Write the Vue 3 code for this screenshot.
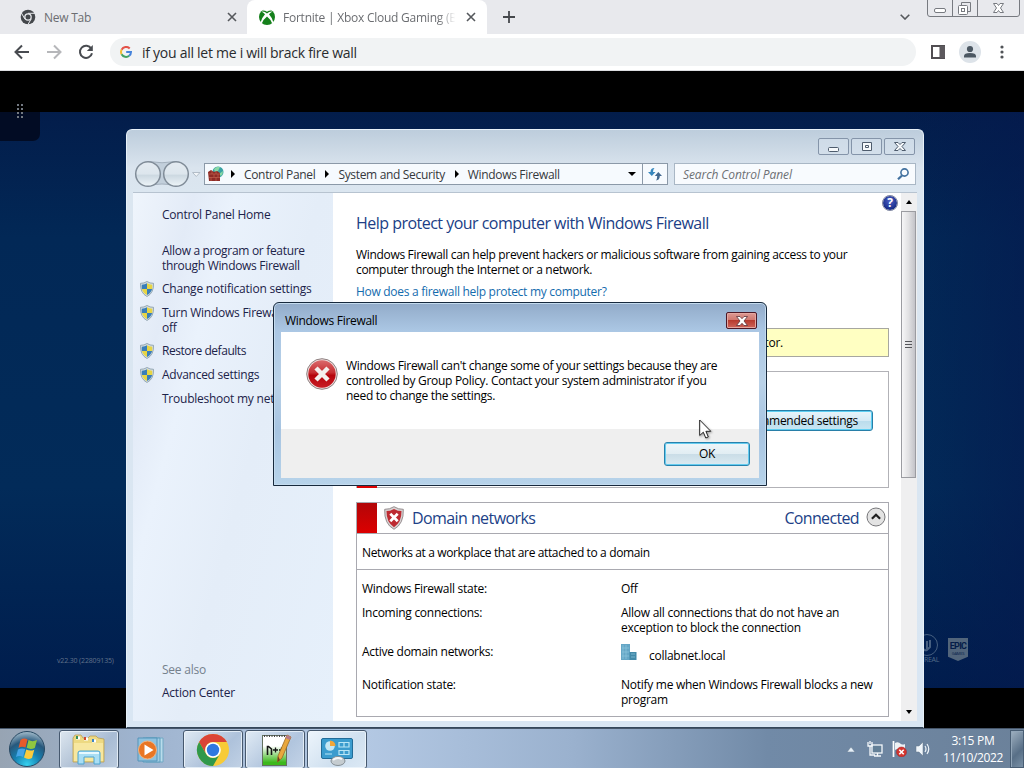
<script setup>
const crumbs = ['Control Panel', 'System and Security', 'Windows Firewall']

const tasks = [
  { lines: ['Allow a program or feature', 'through Windows Firewall'], shield: false, ls: -0.31 },
  { lines: ['Change notification settings'], shield: true, ls: -0.21 },
  { lines: ['Turn Windows Firewall on or', 'off'], shield: true, ls: -0.24 },
  { lines: ['Restore defaults'], shield: true, ls: -0.46 },
  { lines: ['Advanced settings'], shield: true, ls: -0.26 },
  { lines: ['Troubleshoot my network'], shield: false, ls: -0.24 },
]

const pins = [
  { id: 'explorer', open: true },
  { id: 'wmp', open: false },
  { id: 'chrome', open: true },
  { id: 'npp', open: true },
  { id: 'cpl', open: true, active: true },
]
</script>

<template>
  <div class="desktop">
    <!-- browser -->
    <div class="browser">
      <div class="tabs">
        <div class="tab first">
          <svg class="fav" viewBox="0 0 16 16">
            <circle cx="8" cy="8" r="7.300" fill="#44474b" />
            <path d="M8 4.300H15M4.800 9.900L1.400 4M11.200 9.900L7.800 15.800" stroke="#e8eaed" stroke-width="1" />
            <circle cx="8" cy="8" r="3.800" fill="#e8eaed" />
            <circle cx="8" cy="8" r="2.500" fill="#44474b" />
          </svg>
          <span class="tab-title t1">New Tab</span>
          <svg class="x" viewBox="0 0 10 10"><path d="M1 1L9 9M9 1L1 9" /></svg>
        </div>
        <div class="tab active">
          <svg class="fav" viewBox="0 0 16 16">
            <circle cx="8" cy="8" r="8" fill="#15801b" />
            <path d="M3.500 1.500Q6 1.300 8 2.700Q10 1.300 12.500 1.500L11.500 0H4.500Z" fill="#fff" />
            <path d="M1.500 13.500Q3 8.500 6 5.300Q4.500 3.500 2.500 2.600Q5.500 2.200 8 4.400Q10.500 2.200 13.500 2.600Q11.500 3.500 10 5.300Q13 8.500 14.500 13.500L13.200 14.500Q12 10.500 8 7.400Q4 10.500 2.800 14.500Z" fill="#fff" />
          </svg>
          <span class="tab-title t2">Fortnite | Xbox Cloud Gaming (Be</span>
          <svg class="x" viewBox="0 0 10 10"><path d="M1 1L9 9M9 1L1 9" /></svg>
        </div>
        <svg class="plus" viewBox="0 0 12 12"><path d="M6 0V12M0 6H12" stroke="#45484c" stroke-width="1.800" /></svg>
        <svg class="chev" viewBox="0 0 10 6"><path d="M.7 .7L5 5L9.300 .7" fill="none" stroke="#55585c" stroke-width="1.600" /></svg>
        <svg class="caption-buttons" viewBox="0 0 94 18">
          <g fill="none" stroke="#777a80">
            <path d="M.5 0V14Q.5 16.500 3 16.500H90Q92.500 16.500 92.500 14V0M25.500 0V16M50.500 0V16" />
            <rect x="7.500" y="8.500" width="11" height="4" rx="1.500" fill="#fff" />
            <path d="M34.500 5V2.500H43.500V11.500H41" />
            <rect x="31.500" y="5.500" width="9" height="9" rx="1" fill="#fff" />
            <rect x="34.500" y="8.500" width="3" height="3" />
            <path d="M66.500 3.500H70L71.500 5.500L73 3.500H76.500L73.500 8L76.500 12.500H73L71.500 10.500L70 12.500H66.500L69.500 8Z" fill="#fff" />
          </g>
        </svg>
      </div>
      <div class="toolbar">
        <svg class="nav" viewBox="0 0 16 16"><path d="M15 8H2M8 1.500L1.500 8L8 14.500" /></svg>
        <svg class="nav off" viewBox="0 0 16 16"><path d="M1 8H14M8 1.500L14.500 8L8 14.500" /></svg>
        <svg class="nav" viewBox="0 0 16 16">
          <path d="M13.300 4.700A6.100 6.100 0 1 0 14 9.300" />
          <path d="M14.800 1V7H8.800Z" class="solid" />
        </svg>
        <div class="omnibox">
          <svg class="google" viewBox="0 0 12 12" fill="none" stroke-width="2">
            <path d="M9.700 2.500A5 5 0 0 0 1.600 3.700" stroke="#e35349" />
            <path d="M1.600 3.700A5 5 0 0 0 1.600 8.300" stroke="#f1bb35" />
            <path d="M1.600 8.300A5 5 0 0 0 9.200 9.800" stroke="#42a363" />
            <path d="M9.200 9.800A5 5 0 0 0 11 6H6.200" stroke="#4583db" />
          </svg>
          <span>if you all let me i will brack fire wall</span>
        </div>
        <svg class="panel-icon" viewBox="0 0 14 14"><path d="M1 1H13V13H1ZM9.500 1V13" fill="none" stroke="#514e52" stroke-width="2" /><path d="M9 1H14V13H9Z" fill="#5c595d" /></svg>
        <svg class="avatar" viewBox="0 0 22 22">
          <circle cx="11" cy="11" r="11" fill="#dde3e9" />
          <circle cx="11" cy="8" r="3.100" fill="#4c5863" />
          <path d="M5 16.500V15Q5 12 11 12T17 15V16.500Z" fill="#4c5863" />
        </svg>
        <svg class="dots" viewBox="0 0 4 14" fill="#505357"><circle cx="2" cy="2" r="1.600" /><circle cx="2" cy="7" r="1.600" /><circle cx="2" cy="12" r="1.600" /></svg>
      </div>
      <div class="stage">
        <div class="game"></div>
        <div class="handle">
          <i v-for="n in 8" :key="n"></i>
        </div>
        <span class="version">v22.30 (22809135)</span>
        <svg class="unreal" viewBox="0 0 36 32" fill="none" stroke="#465f80">
          <circle cx="13" cy="11" r="10.500" />
          <path d="M9 6V14Q10 17 13 16L16 13V6M13 7V15" stroke-width="2" />
        </svg>
        <span class="unreal-word">UNREAL</span>
        <div class="epic"><b>EPIC</b><small>GAMES</small></div>
      </div>
    </div>

    <!-- control panel window -->
    <div class="window">
      <div class="caption">
        <div class="wbtn"><svg viewBox="0 0 14 12"><rect x="1.500" y="6.500" width="10" height="4" rx="1" /></svg></div>
        <div class="wbtn"><svg viewBox="0 0 14 12"><path d="M2.500 1.500H11.500V9.500H2.500ZM5.500 4.500H8.500V6.500H5.500Z" /></svg></div>
        <div class="wbtn"><svg viewBox="0 0 14 12"><path d="M1.500 1.500H5L7 3.500L9 1.500H12.500L9 5.500L12.500 9.500H9L7 7.500L5 9.500H1.500L5 5.500Z" /></svg></div>
      </div>
      <div class="navbar">
        <svg class="orbs" viewBox="0 0 68 28">
          <defs>
            <linearGradient id="orb" x2="0" y2="1">
              <stop offset="0" stop-color="#e4ebf1" />
              <stop offset=".5" stop-color="#dde6ed" />
              <stop offset=".55" stop-color="#ccd8e1" />
              <stop offset="1" stop-color="#eef5f9" />
            </linearGradient>
          </defs>
          <path d="M14 1.500Q28 4 42 1.500V26Q28 22 14 26Z" fill="#c2cfdb" stroke="#a3b0bd" />
          <circle cx="14" cy="14" r="12.300" fill="url(#orb)" stroke="#808c98" stroke-width="1.500" />
          <circle cx="42" cy="14" r="12.300" fill="url(#orb)" stroke="#808c98" stroke-width="1.500" />
          <path d="M58.500 12.500H66L62.300 16.500Z" fill="#f2f5f8" stroke="#b2bdc8" />
        </svg>
        <div class="address">
          <svg class="wall" viewBox="0 0 16 16">
            <circle cx="10" cy="6" r="5.500" fill="#3aa3a4" />
            <path d="M6 3Q9 0 12 1L10 5L7 6ZM11 8L15 5Q15 8 13 10Z" fill="#8ad9a5" />
            <path d="M0 6L3 4L6 6L9 5L12 7V15L1 15Z" fill="#8e2b26" />
            <path d="M1 8H12M1 11.500H12M4 5V8M8 5V8M6 8V11M10 8V11M3 11V15M8 11V15" stroke="#c0614f" stroke-width=".7" />
          </svg>
          <template v-for="c in crumbs" :key="c">
            <svg class="arrow" viewBox="0 0 4 8"><path d="M0 0L4 4L0 8Z" /></svg>
            <span class="crumb">{{ c }}</span>
          </template>
          <svg class="drop" viewBox="0 0 8 4"><path d="M0 0H8L4 4Z" /></svg>
          <div class="refresh">
            <svg viewBox="0 0 14 14">
              <path d="M6.500 1Q2.500 1 2.500 5H0L3.800 9L7.500 5H5Q5 2.500 6.500 1Z" fill="#3787bd" />
              <path d="M8 13.500Q11.800 13 11.800 9H14L10.300 5L6.800 9H9.200Q9.200 12 8 13.500Z" fill="#42688f" />
            </svg>
          </div>
        </div>
        <div class="search">
          <span>Search Control Panel</span>
          <svg viewBox="0 0 12 12" fill="none" stroke="#42719f"><circle cx="7.500" cy="4.500" r="3.600" stroke-width="1.600" /><path d="M5 7.500L1 11.300" stroke-width="2.200" /></svg>
        </div>
      </div>
      <div class="client">
        <aside class="side">
          <div class="home">Control Panel Home</div>
          <div v-for="t in tasks" :key="t.lines[0]" class="task" :class="{ two: t.lines.length > 1 }">
            <svg v-if="t.shield" class="shield" viewBox="0 0 14 16">
              <path d="M7 .5Q10 2.500 13.500 2.300Q14 12 7 15.500Q0 12 .5 2.300Q4 2.500 7 .5Z" fill="#d5dde0" stroke="#8398a5" stroke-width=".8" />
              <path d="M7 2.300V8H1.900Q1.500 6 1.800 3.700Q5 3.700 7 2.300Z" fill="#397eb9" />
              <path d="M7 2.300V8H12.100Q12.500 6 12.200 3.700Q9 3.700 7 2.300Z" fill="#e7d544" />
              <path d="M1.900 8H7V14Q3 12 1.900 8Z" fill="#e7d544" />
              <path d="M12.100 8H7V14Q11 12 12.100 8Z" fill="#397eb9" />
            </svg>
            <span :style="{ letterSpacing: t.ls + 'px' }"><template v-for="(l, i) in t.lines" :key="l"><br v-if="i">{{ l }}</template></span>
          </div>
          <div class="see">See also</div>
          <div class="action">Action Center</div>
        </aside>
        <main class="main">
          <div class="help">?</div>
          <h1>Help protect your computer with Windows Firewall</h1>
          <p class="intro">Windows Firewall can help prevent hackers or malicious software from gaining access to your<br>computer through the Internet or a network.</p>
          <a class="how">How does a firewall help protect my computer?</a>
          <div class="notice">For your security, some settings are controlled by your system administrator.</div>
          <div class="update">
            <i class="red"></i>
            <div class="use">Use recommended settings</div>
          </div>
          <section class="network">
            <header>
              <i class="red"></i>
              <svg class="red-shield" viewBox="0 0 20 24">
                <path d="M10 .7Q14.500 3.500 19.300 3.300Q20 18 10 23.300Q0 18 .7 3.300Q5.500 3.500 10 .7Z" fill="#d8d2d2" stroke="#8c8587" stroke-width=".9" />
                <path d="M10 2.900Q14 5.100 17.500 5.100Q17.700 16.500 10 21.200Q2.300 16.500 2.500 5.100Q6 5.100 10 2.900Z" fill="#bd2a31" />
                <path d="M6.300 7.800L13.700 15.200M13.700 7.800L6.300 15.200" stroke="#fff" stroke-width="2.700" />
              </svg>
              <span class="net-name">Domain networks</span>
              <span class="status">Connected</span>
              <svg class="collapse" viewBox="0 0 20 20"><circle cx="10" cy="10" r="9" fill="#e3e3e3" stroke="#77777a" /><path d="M5.900 11.800L10 7.700L14.100 11.800" fill="none" stroke="#222" stroke-width="2.200" /></svg>
            </header>
            <div class="desc">Networks at a workplace that are attached to a domain</div>
            <dl>
              <dt>Windows Firewall state:</dt>
              <dd>Off</dd>
              <dt>Incoming connections:</dt>
              <dd>Allow all connections that do not have an<br>exception to block the connection</dd>
              <dt>Active domain networks:</dt>
              <dd class="domain">
                <svg viewBox="0 0 16 16">
                  <rect width="9" height="16" fill="#65a6c6" />
                  <rect x="8.500" y="8" width="7" height="8" fill="#438aa9" />
                  <path d="M2 1V15M5 1V15M1 4H8M1 8H8M1 12H8M10 10H14M10 13H14" stroke="#8cc5dc" stroke-width=".7" />
                </svg>
                <span>collabnet.local</span>
              </dd>
              <dt>Notification state:</dt>
              <dd>Notify me when Windows Firewall blocks a new<br>program</dd>
            </dl>
          </section>
        </main>
        <div class="scroll">
          <svg class="up" viewBox="0 0 6 4"><path d="M0 4L3 0L6 4Z" /></svg>
          <div class="thumb"><i></i><i></i><i></i></div>
          <svg class="down" viewBox="0 0 6 4"><path d="M0 0H6L3 4Z" /></svg>
        </div>
      </div>
    </div>

    <!-- message box -->
    <div class="dialog">
      <div class="dlg-title">
        <span>Windows Firewall</span>
        <div class="dlg-close"><svg viewBox="0 0 14 12"><path d="M1.500 1.500H5L7 3.700L9 1.500H12.500L9 6L12.500 10.500H9L7 8.300L5 10.500H1.500L5 6Z" fill="#fff" stroke="#5c3238" stroke-width=".8" /></svg></div>
      </div>
      <div class="dlg-body">
        <svg class="error" viewBox="0 0 32 32">
          <defs>
            <linearGradient id="err" x2="0" y2="1">
              <stop offset="0" stop-color="#da6a6c" />
              <stop offset=".45" stop-color="#c62d31" />
              <stop offset=".55" stop-color="#b5040c" />
              <stop offset="1" stop-color="#c91c24" />
            </linearGradient>
          </defs>
          <circle cx="16" cy="16" r="15.300" fill="#efdddd" stroke="#8d8080" />
          <circle cx="16" cy="16" r="13.700" fill="url(#err)" />
          <path d="M10 10L22 22M22 10L10 22" stroke="#f4f0ee" stroke-width="4.500" />
        </svg>
        <p>Windows Firewall can't change some of your settings because they are<br>controlled by Group Policy. Contact your system administrator if you<br>need to change the settings.</p>
      </div>
      <div class="dlg-foot"><div class="ok">OK</div></div>
    </div>
    <svg class="cursor" viewBox="0 0 14 21"><path d="M.7 1V16.500L4.300 13.200L6.800 19L9.300 17.900L6.900 12.300H11.800Z" fill="#fff" stroke="#222" stroke-width="1" /></svg>

    <!-- taskbar -->
    <div class="taskbar">
      <svg class="start" viewBox="0 0 38 38">
        <defs>
          <radialGradient id="start" cx=".5" cy=".95" r=".95">
            <stop offset="0" stop-color="#35d1ef" />
            <stop offset=".4" stop-color="#1680b1" />
            <stop offset=".7" stop-color="#27587c" />
            <stop offset="1" stop-color="#a5bdcc" />
          </radialGradient>
        </defs>
        <circle cx="19" cy="19" r="17.500" fill="url(#start)" stroke="#284963" />
        <path d="M12.500 10Q16 7.500 19.500 9.500L17.500 17.500Q13.500 16 10.500 18Z" fill="#e75b2b" />
        <path d="M20.500 10Q24.500 12.300 29 10L26.800 18Q22.500 20 18.700 17.800Z" fill="#8fc640" />
        <path d="M10 19.500Q13.500 17.700 17.200 19L15 27Q11.500 25 8 27Z" fill="#45a4e7" />
        <path d="M18.300 19.500Q22.300 21.500 26.300 19.700L24 28Q20 30 16 27.500Z" fill="#fbcb3e" />
      </svg>
      <div v-for="p in pins" :key="p.id" class="pin" :class="{ open: p.open, active: p.active }">
        <svg v-if="p.id === 'explorer'" viewBox="0 0 34 34">
          <path d="M1 5L3 2H9L11 5H16L18 3H24L26 5L32 6V29H1Z" fill="#edd982" stroke="#b99e55" stroke-width=".8" />
          <path d="M4 5H8M12 6H16M20 8H24" stroke="#fff" stroke-width="3" />
          <path d="M5 3V6" stroke="#36905e" stroke-width="2" />
          <path d="M13 4V7" stroke="#d0482f" stroke-width="2" />
          <path d="M21 6V9" stroke="#3d84c6" stroke-width="2" />
          <path d="M2 10H31V28H2Z" fill="#f7e7a0" />
          <path d="M6 31V20Q6 18 8 18H26Q28 18 28 20V31H22V24H12V31Z" fill="#a9def4" stroke="#4ba4d1" />
          <path d="M7 20H27" stroke="#e7f9ff" stroke-width="2" />
        </svg>
        <svg v-else-if="p.id === 'wmp'" viewBox="0 0 34 34">
          <path d="M12 5H29V29H12Z" fill="#b9dceb" stroke="#70a8c4" />
          <path d="M9 5H26V29H9Z" fill="#a1cde4" stroke="#5e9ebe" />
          <path d="M4 5H23V28H4Z" fill="#8fc2de" stroke="#5594b9" />
          <circle cx="13.500" cy="17" r="9" fill="#e97624" stroke="#f1b27e" />
          <path d="M10.500 11.500L19.500 17L10.500 22.500Z" fill="#fff" />
        </svg>
        <svg v-else-if="p.id === 'chrome'" viewBox="0 0 34 34">
          <circle cx="17" cy="17" r="16" fill="#f7cb37" />
          <path d="M3.100 9A16 16 0 0 1 30.900 9H17A8 8 0 0 0 10.100 21Z" fill="#db4437" />
          <path d="M3.100 9A16 16 0 0 0 17 33L23.900 21A8 8 0 0 1 10.100 21Z" fill="#30984b" />
          <circle cx="17" cy="17" r="7.800" fill="#fff" />
          <circle cx="17" cy="17" r="6.200" fill="#3078e1" />
        </svg>
        <svg v-else-if="p.id === 'npp'" viewBox="0 0 34 34">
          <defs><linearGradient id="note" x2="0" y2="1"><stop offset=".35" stop-color="#fff" /><stop offset=".9" stop-color="#3cb81c" /></linearGradient></defs>
          <rect x="4.500" y="2.500" width="24" height="30" fill="url(#note)" stroke="#63705f" />
          <path d="M6 3H27" stroke="#454545" stroke-width="2" stroke-dasharray="1 1.500" />
          <path d="M9.500 22V13.500H10.500L13.500 16V22" fill="none" stroke="#151515" stroke-width="1.600" />
          <path d="M15 17H20M17.500 14.500V19.500M21 17H26M23.500 14.500V19.500" stroke="#151515" stroke-width="1.300" />
          <path d="M29 2L33 4L24 25L19.500 29L20 23Z" fill="#e9a73d" stroke="#9c6a25" stroke-width=".8" />
          <path d="M29 2L33 4L31.700 7L27.500 5Z" fill="#b77a89" />
          <path d="M20 23L19.500 29L22 27Z" fill="#704422" />
        </svg>
        <svg v-else viewBox="0 0 34 34">
          <rect x="1.500" y="5.500" width="31" height="20" rx="1.500" fill="#3b9cce" stroke="#226c98" />
          <circle cx="10" cy="13" r="4.800" fill="#c5e7f4" />
          <path d="M10 13V7.500A5.500 5.500 0 0 1 15.500 13Z" fill="#f2a637" />
          <path d="M5 21H12M19 9.500H29V14H19ZM19 17.500H29V21.500H19ZM24 9.500V14M24 17.500V21.500" fill="none" stroke="#b9e6f6" stroke-width="1.200" />
          <ellipse cx="18" cy="28" rx="7" ry="4.500" fill="#c5ccd0" stroke="#858f96" />
          <path d="M13 27Q17 23.500 22 26" stroke="#f5f7f8" fill="none" stroke-width="2" />
        </svg>
      </div>
      <div class="tray">
        <svg class="tray-up" viewBox="0 0 8 5"><path d="M0 5L4 0L8 5Z" fill="#e6f0f8" stroke="#66798c" stroke-width=".5" /></svg>
        <svg class="tray-icon" viewBox="0 0 16 16" fill="none" stroke="#f4f8fb"><rect x="5" y="4" width="10" height="8" fill="#637f97" stroke-width="1.300" /><path d="M7 15H14M10.500 12V15M1 1V5H5V1M3 5V14H8M3 0V3" stroke-width="1.300" /></svg>
        <svg class="tray-icon" viewBox="0 0 16 16"><path d="M2.500 0V16" stroke="#fff" stroke-width="1.700" /><path d="M4 2Q7 0 10 3Q12 4 14 3V10Q11 11 9 9T4 9Z" fill="#edf1f5" /><circle cx="10.500" cy="11" r="5" fill="#d4352e" stroke="#a22326" stroke-width=".5" /><path d="M8.300 8.800L12.700 13.200M12.700 8.800L8.300 13.200" stroke="#fff" stroke-width="1.600" /></svg>
        <svg class="tray-icon" viewBox="0 0 16 16"><path d="M1 5H4L8 1V15L4 11H1Z" fill="#eff5fa" stroke="#617488" stroke-width=".5" /><path d="M10 5Q12 8 10 11M12 3Q15.500 8 12 13" fill="none" stroke="#eff5fa" stroke-width="1.200" /></svg>
        <div class="clock">3:15 PM<br><span>11/10/2022</span></div>
        <div class="peek"></div>
      </div>
    </div>
  </div>
</template>

<style>
body {
  margin: 0;
  overflow: hidden;
}
</style>

<style scoped>
* {
  box-sizing: border-box;
}
svg {
  display: block;
  flex: none;
}
.desktop {
  position: relative;
  width: 1024px;
  height: 768px;
  overflow: hidden;
  background: #000;
  font: 12px/15px "Open Sans", "Noto Sans", sans-serif;
  letter-spacing: -0.24px;
  color: #000;
  white-space: nowrap;
}

/* browser */
.tabs {
  display: flex;
  height: 34px;
  background: #e8e9ed;
  color: #6b6d71;
}
.tab {
  display: flex;
  align-items: center;
  height: 34px;
}
.tab.first {
  width: 247px;
  padding-left: 20px;
}
.tab.active {
  width: 240px;
  padding-left: 12px;
  background: #fff;
  border-radius: 8px 8px 0 0;
}
.fav {
  width: 16px;
  height: 16px;
}
.tab-title {
  margin-left: 8px;
}
.t1 {
  width: 183px;
}
.t2 {
  width: 176px;
  -webkit-mask-image: linear-gradient(90deg, #000 88%, transparent 98%);
  mask-image: linear-gradient(90deg, #000 88%, transparent 98%);
}
.x {
  width: 10px;
  height: 10px;
  stroke: #55585c;
  stroke-width: 1.6;
}
.active .x {
  margin-left: 7px;
}
.plus {
  width: 12px;
  height: 12px;
  margin: 11px 0 0 16px;
}
.chev {
  width: 10px;
  height: 6px;
  margin: 14px 0 0 385px;
}
.caption-buttons {
  width: 94px;
  height: 18px;
  margin-left: 17px;
}
.toolbar {
  display: flex;
  align-items: center;
  height: 37px;
  padding-left: 14px;
  background: #fff;
  border-bottom: 1px solid #dcdde0;
}
.nav {
  width: 16px;
  height: 16px;
  margin-right: 16px;
  fill: none;
  stroke: #484b50;
  stroke-width: 2;
}
.nav.off {
  stroke: #b6b7ba;
}
.nav .solid {
  fill: #484b50;
  stroke: none;
}
.omnibox {
  display: flex;
  align-items: center;
  width: 806px;
  height: 28px;
  padding-left: 10px;
  border-radius: 14px;
  background: #f1f3f4;
  color: #292b2e;
  font-size: 14px;
  letter-spacing: -0.27px;
}
.google {
  width: 12px;
  height: 12px;
  margin-right: 10px;
}
.panel-icon {
  width: 14px;
  height: 14px;
  margin-left: 15px;
}
.avatar {
  width: 22px;
  height: 22px;
  margin-left: 14px;
}
.dots {
  width: 4px;
  height: 14px;
  margin-left: 19px;
}
.stage {
  position: relative;
  height: 657px;
  padding-top: 41px;
  background: #000;
}
.game {
  height: 576px;
  background: linear-gradient(90deg, transparent 0 88%, rgba(5, 25, 78, .6)), linear-gradient(180deg, #031d4b, #022856 22%, #022b59 65%, #001d4d);
}
.handle {
  position: absolute;
  left: 0;
  top: 33px;
  width: 40px;
  height: 37px;
  padding-left: 17px;
  display: grid;
  grid-template-columns: 2px 2px;
  gap: 2px;
  align-content: start;
  border-radius: 0 0 7px 0;
  background: linear-gradient(#000 8px, #020c24 8px);
}
.handle i {
  width: 2px;
  height: 2px;
  background: #737982;
}
.version {
  position: absolute;
  left: 57px;
  top: 583px;
  font: 7px/14px "Open Sans", sans-serif;
  letter-spacing: -0.15px;
  color: #60728a;
}
.unreal {
  position: absolute;
  left: 914px;
  top: 563px;
  width: 36px;
  height: 32px;
}
.unreal-word {
  position: absolute;
  left: 914px;
  top: 581px;
  color: #536b88;
  font-size: 7px;
}
.epic {
  position: absolute;
  left: 948px;
  top: 567px;
  width: 20px;
  height: 23px;
  background: #52657b;
  color: #041c49;
  clip-path: polygon(0 0, 100% 0, 100% 82%, 50% 100%, 0 82%);
  text-align: center;
}
.epic b {
  display: block;
  padding-top: 3px;
  font: bold 9px/10px Roboto, sans-serif;
  letter-spacing: -0.7px;
}
.epic small {
  display: block;
  font-size: 4px;
  line-height: 6px;
}

/* window */
.window {
  position: absolute;
  left: 126px;
  top: 129px;
  width: 798px;
  height: 599px;
  padding: 0 6px 7px;
  border-radius: 6px 6px 0 0;
  border: 1px solid #e8f1f8;
  border-bottom-color: #34475b;
  background: linear-gradient(180deg, #bdcddc 0, #dae4ee 38px, #dbe6f0 62px, #d9e6f3);
}
.caption {
  display: flex;
  justify-content: flex-end;
  height: 33px;
  padding: 8px 2px 0;
  gap: 2px;
}
.wbtn {
  display: flex;
  align-items: center;
  justify-content: center;
  width: 31px;
  height: 17px;
  border: 1px solid #8494a9;
  border-radius: 2px;
  background: rgba(214, 225, 237, .6);
}
.wbtn svg {
  width: 14px;
  height: 12px;
  fill: #f6f9fb;
  stroke: #4e5c6d;
}
.navbar {
  display: flex;
  align-items: center;
  height: 22px;
}
.orbs {
  width: 68px;
  height: 28px;
  margin: 0 2px 0 1px;
}
.address {
  display: flex;
  align-items: center;
  width: 464px;
  height: 22px;
  padding-left: 3px;
  border: 1px solid #8b99a8;
  background: #f6fafe;
}
.wall {
  width: 16px;
  height: 16px;
  margin-right: 7px;
}
.arrow {
  width: 4px;
  height: 8px;
}
.crumb {
  margin: 0 10px 0 9px;
  color: #35383c;
  letter-spacing: -0.33px;
}
.drop {
  width: 8px;
  height: 4px;
  margin: 0 6px 0 auto;
}
.refresh {
  display: flex;
  align-items: center;
  justify-content: center;
  width: 25px;
  height: 20px;
  border-left: 1px solid #8b99a8;
}
.refresh svg {
  width: 14px;
  height: 14px;
}
.search {
  display: flex;
  align-items: center;
  justify-content: space-between;
  width: 242px;
  height: 22px;
  margin-left: 6px;
  padding: 0 6px 0 8px;
  border: 1px solid #a9b7c5;
  background: #f8fbfe;
  color: #6d7074;
  font-style: italic;
  letter-spacing: -0.1px;
}
.search svg {
  width: 12px;
  height: 12px;
}
.client {
  display: flex;
  height: 529px;
  margin-top: 7px;
  border-top: 1px solid #b7c3d0;
  background: #fff;
}
.side {
  width: 200px;
  padding: 14px 0 0 29px;
  overflow: hidden;
  background: linear-gradient(105deg, #eff5fc 0, #e3ebf7 18%, #eaf2fc 30%, #e4edf8 55%, #e6f0fb 100%);
  color: #1c2349;
}
.home {
  margin-bottom: 21px;
}
.task {
  position: relative;
  padding-bottom: 9px;
}
.task.two {
  padding-bottom: 8px;
}
.shield {
  position: absolute;
  left: -22px;
  top: 0;
  width: 14px;
  height: 16px;
}
.see {
  margin-top: 247px;
  color: #75818d;
}
.action {
  margin-top: 8px;
}
.main {
  position: relative;
  width: 568px;
  padding: 19px 12px 0 23px;
}
.help {
  position: absolute;
  left: 549px;
  top: 2px;
  width: 16px;
  height: 16px;
  border: 1px solid #d1d5e9;
  border-radius: 50%;
  outline: 1px solid #8188a0;
  outline-offset: -1px;
  background: radial-gradient(circle at 50% 35%, #4d61c5, #182d8b 70%);
  color: #fff;
  font-weight: bold;
  line-height: 14px;
  text-align: center;
}
h1 {
  margin: 0;
  color: #203e86;
  font-weight: 400;
  font-size: 16px;
  line-height: 22px;
  letter-spacing: -0.52px;
}
.intro {
  margin: 13px 0 0;
  letter-spacing: -0.32px;
}
.how {
  display: block;
  margin-top: 7px;
  color: #146cae;
  letter-spacing: -0.29px;
}
.notice {
  height: 29px;
  margin-top: 29px;
  padding: 6px 105px 0 0;
  text-align: right;
  border: 1px solid #a7a7a0;
  background: #ffffc2;
}
.update {
  position: relative;
  height: 117px;
  margin-top: 14px;
  border: 1px solid #b2b2b7;
}
.update .red {
  position: absolute;
  left: 0;
  bottom: -1px;
  height: 116px;
}
.red {
  display: block;
  width: 20px;
  background: linear-gradient(#b20608, #dc0000);
}
.use {
  width: 180px;
  height: 21px;
  margin: 38px 15px 0 auto;
  padding: 2px 14px;
  text-align: right;
  border: 1px solid #287fa8;
  border-radius: 3px;
  box-shadow: inset 0 0 0 1px #5dcef2;
  background: linear-gradient(#e8f5fb, #d5eaf5 50%, #badcec 51%, #c9e6f3);
  letter-spacing: -0.3px;
}
.network {
  height: 215px;
  margin-top: 14px;
  border: 1px solid #a9a9b0;
}
header {
  display: flex;
  align-items: center;
  height: 31px;
  border-bottom: 1px solid #a9a9b0;
  color: #213f87;
  font-size: 16px;
  line-height: 22px;
}
header .red {
  height: 30px;
}
.red-shield {
  width: 20px;
  height: 24px;
  margin: 0 8px 0 7px;
}
.net-name {
  letter-spacing: -0.58px;
}
.status {
  margin-left: auto;
  letter-spacing: -0.65px;
}
.collapse {
  width: 20px;
  height: 20px;
  margin: 0 2px 2px 7px;
}
.desc {
  height: 36px;
  padding: 11px 5px;
  border-bottom: 1px solid #a9a9b0;
  letter-spacing: -0.37px;
}
dl {
  display: grid;
  grid-template-columns: 259px 1fr;
  grid-template-rows: 24px 39px 33px 30px;
  margin: 0;
  padding: 11px 0 0 5px;
  letter-spacing: -0.27px;
}
dt,
dd {
  margin: 0;
}
.domain {
  display: flex;
}
.domain svg {
  width: 16px;
  height: 16px;
}
.domain span {
  margin: 4px 0 0 12px;
}
.scroll {
  display: flex;
  flex-direction: column;
  align-items: center;
  width: 16px;
  background: #efeff0;
}
.up,
.down {
  width: 6px;
  height: 4px;
}
.up {
  margin: 7px 0;
}
.thumb {
  display: flex;
  flex-direction: column;
  align-items: center;
  align-self: flex-start;
  justify-content: center;
  gap: 2px;
  width: 15px;
  height: 267px;
  padding-right: 1px;
  border: 1px solid #9b9ca1;
  background: linear-gradient(90deg, #f6f6f7, #e1e1e3 50%, #c3c3c8);
}
.thumb i {
  width: 7px;
  height: 1px;
  background: #55565a;
}
.down {
  margin: auto 0 7px;
}

/* message box */
.dialog {
  position: absolute;
  left: 273px;
  top: 302px;
  width: 494px;
  height: 184px;
  padding: 0 7px 7px;
  border: 1px solid #17293d;
  border-radius: 6px 6px 0 0;
  background: linear-gradient(#92abc9, #abc7e4 28px, #bad2e8 80px, #a7c4e1 126px, #b7d3ea);
  box-shadow: inset 0 0 0 1px #c4dbee;
}
.dlg-title {
  display: flex;
  align-items: center;
  justify-content: space-between;
  height: 29px;
  padding: 6px 2px 0 4px;
  letter-spacing: -0.3px;
}
.dlg-close {
  display: flex;
  align-items: center;
  justify-content: center;
  width: 31px;
  height: 17px;
  border: 1px solid #4c1826;
  border-radius: 2px;
  background: linear-gradient(#dc9a94, #d0776e 48%, #b73b2f 50%, #cf655a);
  box-shadow: inset 0 0 0 1px #e4a7a0;
}
.dlg-close svg {
  width: 14px;
  height: 12px;
}
.dlg-body {
  display: flex;
  height: 97px;
  padding: 26px 0 0 25px;
  background: #fff;
}
.error {
  width: 32px;
  height: 32px;
}
.dlg-body p {
  margin: 0 0 0 8px;
  letter-spacing: -0.31px;
}
.dlg-foot {
  display: flex;
  justify-content: flex-end;
  height: 49px;
  padding: 13px 9px 0;
  background: #efefef;
}
.ok {
  width: 86px;
  height: 24px;
  border: 1px solid #2782ad;
  border-radius: 3px;
  box-shadow: inset 0 0 0 1px #65ccef;
  background: linear-gradient(#eff6f9, #e1edf3 50%, #cadde7 51%, #dbeaf1);
  line-height: 22px;
  text-align: center;
}
.cursor {
  position: absolute;
  left: 699px;
  top: 419px;
  width: 14px;
  height: 21px;
  filter: drop-shadow(1px 1px 1px rgba(0, 0, 0, .35));
}

/* taskbar */
.taskbar {
  position: absolute;
  left: 0;
  bottom: 0;
  display: flex;
  width: 1024px;
  height: 40px;
  padding-top: 1px;
  border-top: 1px solid #46566a;
  background: linear-gradient(90deg, #97a4b3, #9eb3ce 13%, #b4c9e4 35%, #9ab1ce 56%, #718aa7 75%, #6b819a);
}
.start {
  width: 38px;
  height: 38px;
  margin: 0 13px 0 8px;
}
.pin {
  display: flex;
  align-items: center;
  justify-content: center;
  width: 60px;
  height: 39px;
  margin-right: 2px;
  border: 1px solid transparent;
  border-radius: 3px;
}
.pin.open {
  border-color: #46586e;
  background: linear-gradient(135deg, rgba(238, 246, 252, .8), rgba(180, 199, 222, .5) 60%, rgba(209, 222, 237, .6));
  box-shadow: inset 0 0 0 1px rgba(240, 247, 252, .75);
}
.pin.active {
  background: linear-gradient(135deg, #edf5fc, #d0e0ef 60%, #dce9f5);
}
.pin svg {
  width: 34px;
  height: 34px;
}
.tray {
  display: flex;
  align-items: center;
  margin-left: auto;
}
.tray-up {
  width: 8px;
  height: 5px;
  margin-right: 12px;
}
.tray-icon {
  width: 16px;
  height: 16px;
  margin-right: 8px;
}
.clock {
  width: 76px;
  margin: -1px -1px 0 -4px;
  color: #fff;
  text-align: center;
  line-height: 17px;
}
.clock span {
  letter-spacing: -0.35px;
}
.peek {
  width: 14px;
  height: 38px;
  border: 1px solid #485d73;
  box-shadow: inset 1px 1px 0 #91a5b8;
  background: linear-gradient(135deg, #9fb1c1, #586f87 60%, #7990a5);
}
</style>
